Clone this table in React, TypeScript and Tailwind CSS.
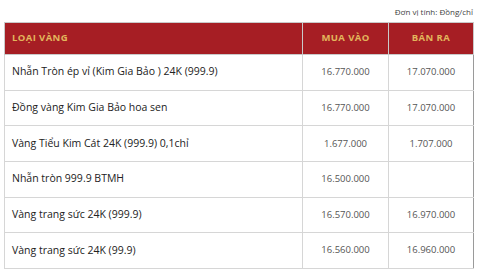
const rows = [
  { name: "Nhẫn Tròn ép vỉ (Kim Gia Bảo ) 24K (999.9)", buy: "16.770.000", sell: "17.070.000" },
  { name: "Đồng vàng Kim Gia Bảo hoa sen", buy: "16.770.000", sell: "17.070.000" },
  { name: "Vàng Tiểu Kim Cát 24K (999.9) 0,1chỉ", buy: "1.677.000", sell: "1.707.000" },
  { name: "Nhẫn tròn 999.9 BTMH", buy: "16.500.000", sell: "" },
  { name: "Vàng trang sức 24K (999.9)", buy: "16.570.000", sell: "16.970.000" },
  { name: "Vàng trang sức 24K (99.9)", buy: "16.560.000", sell: "16.960.000" },
];

export default function App() {
  return (
    <div className="w-[480px] h-[270px] overflow-hidden bg-white pl-[4px] pr-[7px] font-['Open_Sans',sans-serif]">
      <div className="h-[22px] flex items-center justify-end text-[8px] text-[#444] pt-[1px]">
        Đơn vị tính: Đồng/chỉ
      </div>
      <table className="w-[469px] border-collapse table-fixed">
        <colgroup>
          <col className="w-[298px]" />
          <col className="w-[86px]" />
          <col className="w-[85px]" />
        </colgroup>
        <thead>
          <tr className="h-[32px] bg-[#a61e24] text-[#e2b65c] text-[9.5px] font-bold tracking-[0.4px]">
            <th className="text-left pl-[7px] border border-[#c9c9c9]">LOẠI VÀNG</th>
            <th className="text-center border border-[#c9c9c9]">MUA VÀO</th>
            <th className="text-center border border-[#c9c9c9]">BÁN RA</th>
          </tr>
        </thead>
        <tbody>
          {rows.map((r) => (
            <tr key={r.name} className="h-[35.67px]">
              <td className="pl-[7px] text-[10.5px] font-medium text-[#222] border border-[#d6d6d6] whitespace-nowrap">
                {r.name}
              </td>
              <td className="text-center text-[9.5px] text-[#555] border border-[#d6d6d6]">{r.buy}</td>
              <td className="text-center text-[9.5px] text-[#555] border border-[#d6d6d6] border-r-[#9a9a9a]">
                {r.sell}
              </td>
            </tr>
          ))}
        </tbody>
      </table>
    </div>
  );
}
